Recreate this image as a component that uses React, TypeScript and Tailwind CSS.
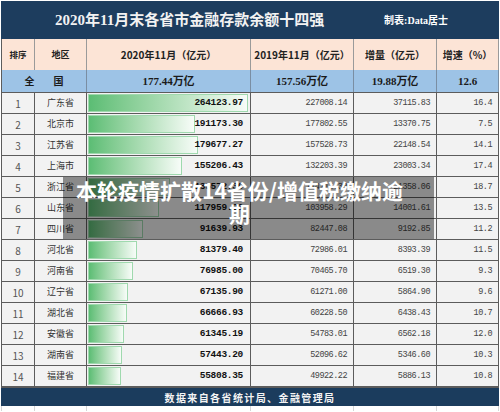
const cjk = "font-['Noto_Sans_CJK_SC',sans-serif]";
const serif = "font-['Liberation_Serif','Noto_Sans_CJK_SC',serif]";
const mono = "font-['Liberation_Mono','Noto_Sans_CJK_SC',monospace]";

const rows = [
    { n: 1, name: '广东省', v20: '264123.97', v19: '227008.14', inc: '37115.83', rate: '16.4', bar: 160 },
    { n: 2, name: '北京市', v20: '191173.30', v19: '177802.55', inc: '13370.75', rate: '7.5', bar: 107 },
    { n: 3, name: '江苏省', v20: '179677.27', v19: '157528.73', inc: '22148.54', rate: '14.1', bar: 110 },
    { n: 4, name: '上海市', v20: '155206.43', v19: '132203.39', inc: '23003.34', rate: '17.4', bar: 94 },
    { n: 5, name: '浙江省', v20: '135572.36', v19: '114214.30', inc: '21358.06', rate: '18.7', bar: 82 },
    { n: 6, name: '山东省', v20: '117959.90', v19: '103958.29', inc: '14001.61', rate: '13.5', bar: 71 },
    { n: 7, name: '四川省', v20: '91639.93', v19: '82447.08', inc: '9192.85', rate: '11.2', bar: 55 },
    { n: 8, name: '河北省', v20: '81379.40', v19: '72986.01', inc: '8393.39', rate: '11.5', bar: 49 },
    { n: 9, name: '河南省', v20: '76985.00', v19: '70465.70', inc: '6519.30', rate: '9.3', bar: 45 },
    { n: 10, name: '辽宁省', v20: '67135.90', v19: '61271.00', inc: '5864.90', rate: '9.6', bar: 40 },
    { n: 11, name: '湖北省', v20: '66666.93', v19: '60228.50', inc: '6438.43', rate: '10.7', bar: 39 },
    { n: 12, name: '安徽省', v20: '61345.19', v19: '54783.01', inc: '6562.18', rate: '12.0', bar: 36 },
    { n: 13, name: '湖南省', v20: '57443.20', v19: '52096.62', inc: '5346.60', rate: '10.3', bar: 34 },
    { n: 14, name: '福建省', v20: '55808.35', v19: '49922.22', inc: '5886.13', rate: '10.8', bar: 33 },
];

const DataRow = ({ r }: { r: (typeof rows)[number] }) => (
    <div className="flex h-[21px] border-b border-[#5c5c5c] bg-[#f2f2f2]">
        <div className={`flex w-[33px] items-center justify-center border-r border-[#5c5c5c] text-[10px] text-[#555] ${cjk}`}>
            {r.n}
        </div>
        <div className={`flex w-[52px] items-center justify-center border-r border-[#5c5c5c] text-[9px] text-[#333] ${cjk}`}>
            {r.name}
        </div>
        <div className="relative flex w-[164px] items-center justify-end border-r border-[#5c5c5c] pr-[7px]">
            <div
                className="absolute left-[1px] top-[1px] bottom-[1px] border border-[#9fd9ae] bg-gradient-to-r from-[#5bbd74] to-[#f7fcf8]"
                style={{ width: r.bar }}
            />
            <span className={`relative text-[9.5px] font-bold tracking-[-0.3px] text-[#111] ${mono}`}>{r.v20}</span>
        </div>
        <div className={`flex w-[103px] items-center justify-end border-r border-[#5c5c5c] pr-[6px] text-[8.5px] tracking-[-0.5px] text-[#444] ${mono}`}>
            {r.v19}
        </div>
        <div className={`flex w-[83px] items-center justify-end border-r border-[#5c5c5c] pr-[6px] text-[8.5px] tracking-[-0.5px] text-[#444] ${mono}`}>
            {r.inc}
        </div>
        <div className={`flex w-[62px] items-center justify-end border-r border-[#5c5c5c] pr-[6px] text-[8.5px] tracking-[-0.5px] text-[#444] ${mono}`}>
            {r.rate}
        </div>
    </div>
);

export default function App() {
    return (
        <div className="relative h-[412px] w-[500px] overflow-hidden bg-white px-[1px]">
            <div className="h-[1px]" />
            {/* title */}
            <div className="flex h-[38px] items-center bg-[#1d3d5e] pl-[54px] pr-[51px]">
                <span className={`text-[15px] font-bold text-[#f2f2f2] ${serif}`}>2020年11月末各省市金融存款余额十四强</span>
                <span className={`ml-auto text-[10px] font-bold text-white ${serif}`}>制表:Data居士</span>
            </div>

            <div className="border-l border-[#5c5c5c]">
                {/* header */}
                <div className={`flex h-[31px] bg-[#fce4d6] font-bold text-[#222] ${cjk}`}>
                    <div className="flex w-[33px] items-center justify-center border-r border-[#9a9a9a] text-[8.5px]">排序</div>
                    <div className="flex w-[52px] items-center justify-center border-r border-[#9a9a9a] text-[9px]">地区</div>
                    <div className="flex w-[164px] items-center justify-center border-r border-[#9a9a9a] text-[10px]">2020年11月（亿元）</div>
                    <div className="flex w-[103px] items-center justify-center border-r border-[#9a9a9a] text-[10px]">2019年11月（亿元）</div>
                    <div className="flex w-[83px] items-center justify-center border-r border-[#9a9a9a] text-[10px]">增量（亿元）</div>
                    <div className="flex w-[62px] items-center justify-center border-r border-[#9a9a9a] text-[10px]">增速（%）</div>
                </div>

                {/* national total */}
                <div className={`flex h-[23px] border-b border-[#5c5c5c] bg-[#9dc3e6] font-bold text-[#1a1a1a] ${serif}`}>
                    <div className="flex w-[85px] items-center justify-center gap-[19px] border-r border-[#7a8ea3] text-[10px]">
                        <span>全</span>
                        <span>国</span>
                    </div>
                    <div className="flex w-[164px] items-center justify-center border-r border-[#7a8ea3] text-[11px]">177.44万亿</div>
                    <div className="flex w-[103px] items-center justify-center border-r border-[#7a8ea3] text-[11px]">157.56万亿</div>
                    <div className="flex w-[83px] items-center justify-center border-r border-[#7a8ea3] text-[11px]">19.88万亿</div>
                    <div className="flex w-[62px] items-center justify-center border-r border-[#7a8ea3] text-[11px]">12.6</div>
                </div>

                {rows.map((r) => (
                    <DataRow key={r.n} r={r} />
                ))}
            </div>

            <div className="h-[1px] bg-[#5c5c5c]" />
            {/* source */}
            <div className="flex h-[18px] items-center justify-center bg-[#1b3c5d]">
                <span className={`text-[10px] font-bold tracking-[1.4px] text-[#f4f4f4] ${cjk}`}>数据来自各省统计局、金融管理局</span>
            </div>
            <div className="flex h-[5px] border-l border-[#d6d6d6]">
                <div className="w-[33px] border-r border-[#d6d6d6]" />
                <div className="w-[52px] border-r border-[#d6d6d6]" />
                <div className="w-[164px] border-r border-[#d6d6d6]" />
                <div className="w-[103px] border-r border-[#d6d6d6]" />
                <div className="w-[83px] border-r border-[#d6d6d6]" />
                <div className="w-[62px] border-r border-[#d6d6d6]" />
            </div>

            {/* news headline overlay */}
            <div className="absolute left-[63px] top-[177px] h-[62px] w-[371px] bg-[rgba(0,0,0,0.43)] pl-[10px] pt-[2px]">
                <div className={`w-[333px] text-center text-[21px] font-bold leading-[23px] text-white ${cjk}`}>
                    本轮疫情扩散14省份/增值税缴纳逾期
                </div>
            </div>
        </div>
    );
}
